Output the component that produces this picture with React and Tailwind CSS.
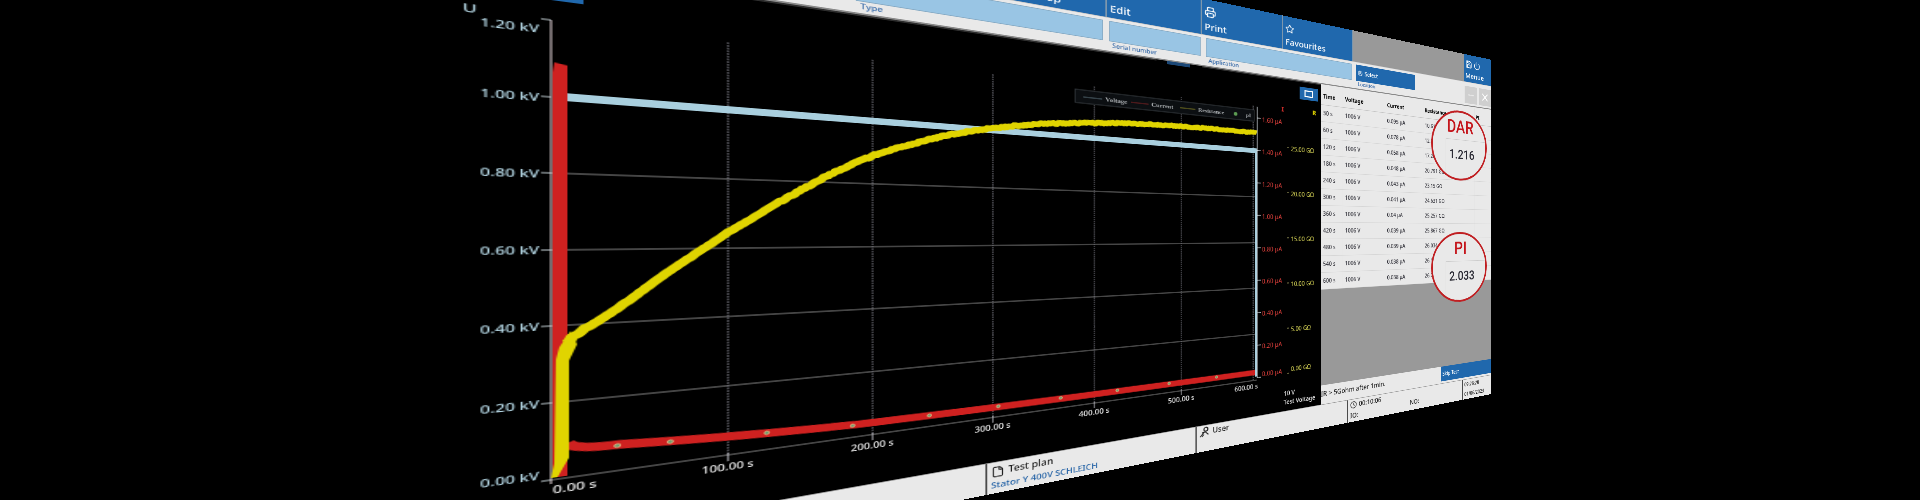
import React from 'react';
import { Printer, Star, File, Clock, Power, Save, X, MoreHorizontal } from 'lucide-react';

const ROWS = [
  ['30 s', '1006 V', '0.095 µA', '10.61 GΩ'],
  ['60 s', '1006 V', '0.078 µA', '12.90 GΩ'],
  ['120 s', '1006 V', '0.058 µA', '17.28 GΩ'],
  ['180 s', '1006 V', '0.048 µA', '20.791 GΩ'],
  ['240 s', '1006 V', '0.043 µA', '23.15 GΩ'],
  ['300 s', '1006 V', '0.041 µA', '24.631 GΩ'],
  ['360 s', '1006 V', '0.04 µA', '25.257 GΩ'],
  ['420 s', '1006 V', '0.039 µA', '25.867 GΩ'],
  ['480 s', '1006 V', '0.039 µA', '26.034 GΩ'],
  ['540 s', '1006 V', '0.038 µA', '26.15 GΩ'],
  ['600 s', '1006 V', '0.038 µA', '26.23 GΩ'],
];

const VOLTAGE_TICKS = [
  { label: '1.20 kV', y: 160, textY: 174 },
  { label: '1.00 kV', y: 237, textY: 242 },
  { label: '0.80 kV', y: 313, textY: 318 },
  { label: '0.60 kV', y: 390, textY: 394 },
  { label: '0.40 kV', y: 466, textY: 470 },
  { label: '0.20 kV', y: 543, textY: 547 },
  { label: '0.00 kV', y: 620, textY: 618 },
];
const UA = ['1.60', '1.40', '1.20', '1.00', '0.80', '0.60', '0.40', '0.20', '0.00'];
const GOHM = ['25.00', '20.00', '15.00', '10.00', '5.00', '0.00'];

// measured resistance curve, chart coordinates
const RESISTANCE = [
  [64, 484], [67, 478], [75, 470], [99, 448], [124, 421], [149, 396], [173, 372], [211, 339], [249, 308], [292, 279],
  [324, 263], [366, 246], [411, 233], [464, 222], [530, 214], [590, 209], [649, 207], [708, 206], [768, 206],
];

// Catmull-Rom through the samples, with a little measuring noise
function curvePoints(points) {
  const out = [];
  let n = 0;
  for (let i = 0; i < points.length - 1; i++) {
    const [x1, y1] = points[i];
    const [x2, y2] = points[i + 1];
    const y0 = (points[i - 1] || points[i])[1];
    const y3 = (points[i + 2] || points[i + 1])[1];
    const steps = Math.max(1, Math.round((x2 - x1) / 2));
    for (let s = 0; s < steps; s++) {
      const t = s / steps;
      const y = 0.5 * (2 * y1 + (y2 - y0) * t + (2 * y0 - 5 * y1 + 4 * y2 - y3) * t * t + (3 * y1 - y0 - 3 * y2 + y3) * t * t * t);
      const noise = Math.sin(n * n * 1.7) * (x1 > 200 ? 0.8 : 0.3);
      out.push(`${(x1 + (x2 - x1) * t).toFixed(1)},${(y + noise).toFixed(1)}`);
      n += 1;
    }
  }
  out.push(points[points.length - 1].join(','));
  return out.join(' ');
}

const timeX = (s) => 54 + s * 1.19;
const MARKERS = [30, 60, 120, 180, 240, 300, 360, 420, 480, 540];

function Tab({ label, icon, className = 'w-[134px]' }) {
  return (
    <button type="button" className={`shrink-0 flex flex-col justify-end items-start gap-1 px-1 pb-1 bg-[#2068ad] border-r-2 border-[#7d97ad] text-white text-[15px] leading-5 font-medium ${className}`}>
      {icon}
      {label}
    </button>
  );
}

function Field({ id, label, className }) {
  return (
    <div className={`flex flex-col shrink-0 ${className}`}>
      <input id={id} type="text" className="h-[30px] w-full bg-[#99c5e4] border border-[#86aac4]" />
      <label htmlFor={id} className="text-[9px] leading-3 text-[#3569a8] font-medium pl-1">{label}</label>
    </div>
  );
}

function Header() {
  return (
    <header>
      <nav className="flex h-[57px]">
        <Tab label="" className="w-[412px]" />
        <Tab label="Start/Stop" />
        <Tab label="Edit" />
        <Tab label="Print" icon={<Printer size={18} />} />
        <Tab label="Favourites" icon={<Star size={16} />} />
        <div className="flex-1 bg-[#999999]" />
        <button type="button" className="w-[74px] flex flex-col justify-end items-start gap-1 px-1 pb-1 bg-[#2068ad] text-white text-[15px] leading-5 font-medium">
          <span className="flex gap-1"><Save size={18} /><Power size={18} /></span>
          Menue
        </button>
      </nav>
      <div className="flex h-[51px] gap-2 pt-1 bg-[#e9e9e9] border-t border-b-2 border-t-[#c5c5c5] border-b-[#8a8a8a]">
        <input type="text" aria-label="Customer" className="w-[269px] h-[30px] bg-[#99c5e4] border border-[#86aac4]" />
        <Field id="type" label="Type" className="w-[264px]" />
        <Field id="serial" label="Serial number" className="w-[129px]" />
        <Field id="application" label="Application" className="w-[260px]" />
        <div className="w-[130px] shrink-0 flex flex-col">
          <button type="button" id="location" className="h-[30px] flex items-center gap-1 px-1 bg-[#2068ad] text-white text-[10px] font-medium">
            <Save size={10} /> Select
          </button>
          <label htmlFor="location" className="text-[9px] leading-3 text-[#3569a8] font-medium pl-1">Location</label>
        </div>
        <div className="flex-1 flex justify-end gap-1 pt-1">
          <button type="button" aria-label="More" className="w-[34px] h-9 bg-[#cfcfcf] text-white flex items-center justify-center"><MoreHorizontal size={18} /></button>
          <button type="button" aria-label="Close" className="w-[34px] h-9 bg-[#cfcfcf] text-white flex items-center justify-center"><X size={26} /></button>
        </div>
      </div>
    </header>
  );
}

function Legend() {
  return (
    <g className="text-[9px] font-bold" fontFamily="'Liberation Serif', serif" fill="#a9adb0">
      <rect x="506" y="168" width="258" height="19" fill="#0c0f12" stroke="#3a4045" />
      <path d="M516 178H540" stroke="#5f7780" />
      <text x="544" y="181">Voltage</text>
      <path d="M578 178H602" stroke="#8a2424" />
      <text x="606" y="181">Current</text>
      <path d="M647 178H670" stroke="#8d8a24" />
      <text x="674" y="181">Resistance</text>
      <circle cx="733" cy="178" r="3" fill="#5c9c52" />
      <text x="750" y="181">pI</text>
    </g>
  );
}

function Chart() {
  return (
    <svg viewBox="0 108 884 572" className="block w-full h-auto text-[10px]" role="img" aria-label="Insulation resistance over time">
      <rect x="4" y="112" width="70" height="28" fill="#2068ad" />
      <path d="M0 109H613M680 109H884" stroke="#5a5a5a" />
      <rect x="628" y="108" width="34" height="5" fill="#1c4877" />
      <text x="3" y="162" fill="#b9dcea" className="text-[11px] font-medium">U</text>

      {/* grid */}
      <g stroke="#8b8b8b" strokeWidth="1">
        {VOLTAGE_TICKS.slice(2).map(({ label, y }) => (
          <path key={label} d={`M54 ${y}H768`} />
        ))}
      </g>
      <g stroke="#7c7c86" strokeWidth="1" strokeDasharray="2 1">
        {[100, 200, 300, 400, 500, 595].map((s) => (
          <path key={s} d={`M${timeX(s)} 161V620`} />
        ))}
      </g>
      <g stroke="#c9c9d2">
        {[100, 200, 300, 400, 500].map((s) => (
          <path key={s} d={`M${timeX(s)} 618V627`} />
        ))}
      </g>

      {/* voltage axis */}
      <path d="M54 160V624" stroke="#e7d7dc" strokeWidth="1" />
      {VOLTAGE_TICKS.map(({ label, y, textY }) => (
        <g key={label}>
          <path d={`M48 ${y}H54`} stroke="#c9d5da" />
          <text x="47" y={textY} textAnchor="end" fill="#b9dcea" className="font-medium">{label}</text>
        </g>
      ))}

      {/* time axis */}
      <g fill="#efefef" className="font-medium">
        <text x="55" y="634">0.00 s</text>
        {[100, 200, 300, 400, 500].map((s) => (
          <text key={s} x={timeX(s)} y="637" textAnchor="middle">{s}.00 s</text>
        ))}
        <text x="770" y="634" textAnchor="end">600.00 s</text>
      </g>

      <Legend />

      {/* current */}
      <path d="M56 202L64 204V618H55V212Z" fill="#cf2120" />
      <path d="M64 585Q68 593 97 593Q160 600 275 605Q420 608 768 607" fill="none" stroke="#cf2120" strokeWidth="9" />
      {MARKERS.map((s) => (
        <circle key={s} cx={timeX(s) + 6} cy={s < 50 ? 594 : s < 100 ? 597 : s < 150 ? 601 : 606} r="2" fill="#6fa070" stroke="#e0b080" />
      ))}

      {/* voltage */}
      <path d="M64 236H768" stroke="#a9cfde" strokeWidth="8" />
      <path d="M767 234V614" stroke="#a9cfde" strokeWidth="4" />

      {/* resistance */}
      <path d="M54 618L56 604L57 500L59 488L66 472L70 486L65 502V600L58 618Z" fill="#e0d400" />
      <polyline points={curvePoints(RESISTANCE)} fill="none" stroke="#e0d400" strokeWidth="8" strokeLinejoin="round" />

      {/* current and resistance axes */}
      <path d="M769 162V617" stroke="#dfe8ee" />
      {UA.map((v, i) => (
        <g key={v}>
          <path d={`M769 ${181 + i * 54.4}H775`} stroke="#dfe8ee" />
          <text x="777" y={(i === 8 ? 180 : 187) + i * 54.4} fill="#e0403c">{v} µA</text>
        </g>
      ))}
      {GOHM.map((v, i) => (
        <g key={v}>
          <path d={`M821 ${226 + i * 78}H825`} stroke="#b5b06a" />
          <text x="828" y={(i === 5 ? 223 : 232) + i * 78} fill="#e6e35c">{v} GΩ</text>
        </g>
      ))}
      <text x="811" y="165" fill="#d8302c" className="font-black">I</text>
      <text x="868" y="165" fill="#e0d400" className="font-black">R</text>
      <text x="815" y="654" fill="#f2f2f2" className="font-medium">10 V</text>
      <text x="815" y="669" fill="#f2f2f2" className="font-medium">Test Voltage</text>
    </svg>
  );
}

function Rating({ name, value, className }) {
  return (
    <div className={`absolute left-[239px] w-[145px] h-[145px] rounded-full border-4 border-[#c01f22] bg-[#e9e9e9] overflow-hidden flex flex-col font-[Roboto,sans-serif] ${className}`}>
      <div className="h-[56px] ml-[32px] w-[76px] text-center border-[#cccccc] text-[#c4161c] text-[36px] leading-[60px] font-medium">{name}</div>
      <div className="flex-1 ml-[32px] pl-2 border-l border-t border-[#cccccc] text-[#2b2b35] text-[26px] leading-[60px] font-medium">{value}</div>
    </div>
  );
}

function Results() {
  return (
    <section className="flex-1 min-w-0 flex flex-col bg-[#999999]">
      <div className="relative flex-1">
        <table className="w-full table-fixed border-collapse bg-[#e9e9e9] text-[10px] font-medium text-[#33333b]">
          <thead>
            <tr className="h-9 text-left text-black border-b border-[#c4c4c4]">
              <th className="w-[43px] pl-1 pt-2">Time</th>
              <th className="w-[89px] pl-1 pt-2 border-l border-[#c4c4c4]">Voltage</th>
              <th className="w-[87px] pl-1 pt-2 border-l border-[#c4c4c4]">Current</th>
              <th className="w-[130px] pl-1 pt-2 border-l border-[#c4c4c4]">Resistance</th>
              <th className="pl-1 pt-2 border-l border-[#c4c4c4]">PI</th>
            </tr>
          </thead>
          <tbody>
            {ROWS.map((row) => (
              <tr key={row[0]} className="h-[30px] border-b border-[#d6d6d6]">
                <td className="pl-1">{row[0]}</td>
                <td className="pl-1 border-l border-[#d0d0d0]">{row[1]}</td>
                <td className="pl-1 border-l border-[#d0d0d0]">{row[2]}</td>
                <td className="pl-1 border-l border-[#d0d0d0]">{row[3]}</td>
                <td className="border-l border-[#d0d0d0]" />
              </tr>
            ))}
          </tbody>
        </table>
        <Rating name="DAR" value="1.216" className="top-[12px]" />
        <Rating name="PI" value="2.033" className="top-[264px]" />
      </div>
      <div className="h-[34px] flex items-start bg-[#e9e9e9]">
        <p className="flex-1 text-[12px] leading-8 font-medium text-[#222222] whitespace-nowrap">IR &gt; 5Gohm after 1min.</p>
        <button type="button" className="w-[133px] h-[30px] px-1 text-left bg-[#2068ad] text-white text-[10px] font-medium">Skip Test</button>
      </div>
    </section>
  );
}

function UserIcon() {
  return (
    <svg viewBox="0 0 16 16" className="w-4 h-4" fill="none" stroke="currentColor" strokeWidth="1.5">
      <circle cx="10" cy="4" r="3" />
      <path d="M1 15L8 8M4 9L9 8L11 10L14 13M7 12L4 15" />
    </svg>
  );
}

function Footer() {
  return (
    <footer className="h-[42px] flex bg-[#e9e9e9] border-t border-[#9a9a9a] text-[12px] leading-5 font-medium text-[#1d1d1d] whitespace-nowrap">
      <div className="w-[136px]" />
      <div className="w-[267px]" />
      <div className="w-[267px] px-1 pt-1 border-l-2 border-[#4a4a4a]">
        <p className="flex items-center gap-1 leading-4"><File size={15} /> Test plan</p>
        <p className="text-[#2563a6] leading-5 text-[11px]">Stator Y 400V SCHLEICH</p>
      </div>
      <div className="w-[266px] px-1 border-l-2 border-[#4a4a4a]">
        <p className="flex items-center gap-1"><UserIcon /> User</p>
      </div>
      <div className="w-[265px] px-1 border-l-2 border-[#4a4a4a] flex">
        <div className="w-[130px]">
          <p className="flex items-center gap-1"><Clock size={14} /> 00:10:06</p>
          <p>IO:</p>
        </div>
        <p className="pt-4">NO:</p>
      </div>
      <div className="flex-1 px-1 border-l-2 border-[#4a4a4a] text-[10px]">
        <p>09:26:28</p>
        <p>01/06/2023</p>
      </div>
    </footer>
  );
}

export default function App() {
  return (
    <main className="h-screen w-full overflow-hidden bg-black perspective-[529px] [perspective-origin:1386px_232px] font-['Noto_Sans','Open_Sans',sans-serif]">
      <div className="ml-[497px] w-[1280px] h-[722px] [transform-origin:54px_0] [transform:translateY(-140px)_rotateY(30deg)] flex flex-col bg-black">
        <Header />
        <div className="flex-1 min-h-0 flex">
          <section className="relative w-[884px] shrink-0">
            <Chart />
            <button type="button" aria-label="Maximise chart" className="absolute top-[10px] right-[6px] w-[34px] h-[22px] bg-[#2068ad] flex items-center justify-center">
              <span className="w-4 h-3 border-2 border-white" />
            </button>
          </section>
          <Results />
        </div>
        <Footer />
      </div>
    </main>
  );
}
